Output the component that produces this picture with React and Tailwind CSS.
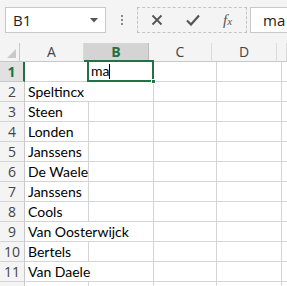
import React from "react";

const names = ["", "Speltincx", "Steen", "Londen", "Janssens", "De Waele", "Janssens", "Cools", "Van Oosterwijck", "Bertels", "Van Daele", ""];
const cols = ["A", "B", "C", "D", ""];
const widths = ["w-[64px]", "w-[65px]", "w-[63px]", "w-[65px]", "w-[10px]"];

export default function App() {
  return (
    <div className="w-[287px] h-[286px] overflow-hidden bg-white relative" style={{ fontFamily: "Lato, 'Liberation Sans', sans-serif" }}>
      {/* formula bar */}
      <div className="h-[43px] bg-[#f4f4f4] flex items-start pt-[7px] pl-[5px]">
        <div className="w-[101px] h-[26px] bg-white border border-[#c8c8c8] flex items-center justify-between pl-[7px] pr-[7px]">
          <span className="text-[15px] text-[#222] leading-none" style={{ fontFamily: "'Open Sans', sans-serif" }}>B1</span>
          <svg width="8" height="5" viewBox="0 0 8 5"><path d="M0 0 L8 0 L4 4.5 Z" fill="#555" /></svg>
        </div>
        <div className="w-[31px] h-[26px] flex flex-col items-center justify-center gap-[2px]">
          <div className="w-[2px] h-[2px] bg-[#888]" />
          <div className="w-[2px] h-[2px] bg-[#888]" />
          <div className="w-[2px] h-[2px] bg-[#888]" />
        </div>
        <div className="w-[110px] h-[26px] border border-dashed border-[#c4c4c4] flex items-center">
          <div className="w-[38px] flex justify-center">
            <svg width="12" height="12" viewBox="0 0 12 12"><path d="M1.5 1.5 L10.5 10.5 M10.5 1.5 L1.5 10.5" stroke="#555" strokeWidth="1.8" /></svg>
          </div>
          <div className="w-[33px] flex justify-center">
            <svg width="14" height="12" viewBox="0 0 14 12"><path d="M1 6.5 L5 10.5 L13 1.5" stroke="#555" strokeWidth="2.2" fill="none" /></svg>
          </div>
          <div className="w-[37px] flex justify-center items-center">
            <span className="italic text-[#555] leading-none" style={{ fontFamily: "'Liberation Serif', serif" }}>
              <span className="text-[15px]">f</span><span className="text-[11px]">x</span>
            </span>
          </div>
        </div>
        <div className="ml-[3px] flex-1 h-[26px] bg-white border border-[#c8c8c8] border-r-0 flex items-center pl-[12px]">
          <span className="text-[15px] text-[#222] leading-none" style={{ fontFamily: "'Open Sans', sans-serif" }}>ma</span>
        </div>
      </div>

      {/* header row */}
      <div className="flex h-[19px]">
        <div className="w-[25px] h-[19px] bg-[#f4f4f4] border-r border-b border-[#c8c8c8] relative flex items-end justify-end pr-[3px] pb-[3px]">
          <svg width="9" height="9" viewBox="0 0 9 9"><path d="M9 0 L9 9 L0 9 Z" fill="#c9c9c9" /></svg>
        </div>
        {cols.map((c, i) => (
          <div
            key={i}
            className={`${widths[i]} shrink-0 h-[19px] flex items-center justify-center text-[14px] leading-none ${
              i === 1
                ? "bg-[#d4d4d4] border-b-2 border-b-[#217346] text-[#217346] font-bold border-r border-r-[#bdbdbd]"
                : "bg-[#f4f4f4] border-b border-[#c8c8c8] text-[#444] border-r border-r-[#dadada]"
            }`}
            style={{ fontFamily: "'Open Sans', sans-serif" }}
          >
            {c}
          </div>
        ))}
      </div>

      {/* rows */}
      {names.map((n, r) => (
        <div key={r} className="flex h-[20px]">
          <div
            className={`w-[25px] shrink-0 h-[20px] flex items-center justify-center text-[14px] leading-none border-b ${
              r === 0
                ? "bg-[#e1e1e1] text-[#217346] font-bold border-r-2 border-r-[#217346] border-b-[#c8c8c8]"
                : "bg-[#f4f4f4] text-[#444] border-r border-r-[#c8c8c8] border-b-[#d4d4d4]"
            }`}
            style={{ fontFamily: "'Open Sans', sans-serif" }}
          >
            {r < 11 ? r + 1 : ""}
          </div>
          {cols.map((c, i) => (
            <div
              key={i}
              className={`${widths[i]} shrink-0 h-[20px] border-b border-[#d4d4d4] ${
                i === 0 && n && n.length > 8 ? "" : "border-r"
              } border-r-[#d4d4d4] relative flex items-center pl-[3px] text-[14px] text-black leading-none whitespace-nowrap`}
            >
              {i === 0 ? <span className="relative z-10">{n}</span> : null}
              {i === 1 && r === 0 ? (
                <div className="absolute left-[-2px] top-[-2px] w-[67px] h-[22px] border-2 border-[#217346] z-20 flex items-center pl-[2px]">
                  <span className="text-[14px] leading-none">ma</span>
                  <span className="w-px h-[15px] bg-black" />
                  <div className="absolute right-[-4px] bottom-[-4px] w-[5px] h-[5px] bg-[#217346] border border-white" />
                </div>
              ) : null}
            </div>
          ))}
        </div>
      ))}
    </div>
  );
}
